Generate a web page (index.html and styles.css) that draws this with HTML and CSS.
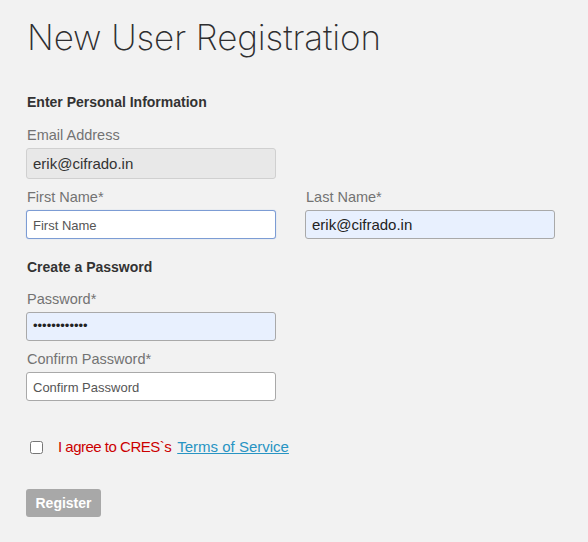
FILE: index.html
```html
<!DOCTYPE html>
<html>
<head>
	<meta charset="UTF-8">
	<title>New User Registration</title>
	<link rel="stylesheet" href="styles.css">
</head>
<body>
	<div class="container">
		<h1>New User Registration</h1>
		<form>
			<h2>Enter Personal Information</h2>
			<div class="field">
				<label for="email">Email Address</label>
				<input type="text" id="email" class="readonly" value="erik@cifrado.in" readonly>
			</div>
			<div class="row">
				<div class="field">
					<label for="first-name">First Name*</label>
					<input type="text" id="first-name" class="focused" placeholder="First Name">
				</div>
				<div class="field">
					<label for="last-name">Last Name*</label>
					<input type="text" id="last-name" class="filled" value="erik@cifrado.in">
				</div>
			</div>

			<h2 class="section">Create a Password</h2>
			<div class="field">
				<label for="password">Password*</label>
				<input type="password" id="password" class="filled" value="secretpass12">
			</div>
			<div class="field">
				<label for="confirm">Confirm Password*</label>
				<input type="password" id="confirm" placeholder="Confirm Password">
			</div>

			<div class="agree">
				<input type="checkbox" id="terms">
				<label for="terms">I agree to CRES`s</label>
				<a href="#">Terms of Service</a>
			</div>

			<input type="submit" value="Register" disabled>
		</form>
	</div>
</body>
</html>
```

FILE: styles.css
```css
body {
	margin: 0;
	background-color: #f2f2f2;
	font-family: "Liberation Sans", Arial, sans-serif;
	color: #333;
}
.container {
	padding: 14px 26px 0 26px;
}
h1 {
	margin: 0 0 0 1px;
	font-family: Inter, "Liberation Sans", sans-serif;
	font-weight: 200;
	font-size: 35px;
	line-height: 46px;
	letter-spacing: -0.1px;
	color: #2e2e30;
}
h2 {
	margin: 33px 0 15px 1px;
	font-size: 14px;
	line-height: 18px;
	font-weight: bold;
	color: #333;
}
h2.section {
	margin-top: 10px;
	margin-bottom: 14px;
}
.field {
	display: flex;
	flex-direction: column;
	width: 250px;
	margin-bottom: 9px;
}
.field label {
	font-size: 14.5px;
	line-height: 18px;
	color: #737373;
	margin: 0 0 4px 1px;
}
.row {
	display: flex;
	gap: 29px;
}
input[type=text],
input[type=password] {
	box-sizing: border-box;
	width: 250px;
	height: 29px;
	padding: 0 6px;
	border: 1px solid #a9a9a9;
	border-radius: 3px;
	background-color: #fff;
	font-family: "Liberation Sans", Arial, sans-serif;
	font-size: 15px;
	color: #222;
	outline: none;
}
input::placeholder {
	font-size: 13px;
	color: #555;
}
input.readonly {
	height: 31px;
	background-color: #e8e8e8;
	border-color: #d0d0d0;
	color: #333;
}
input.filled {
	background-color: #e8f0fe;
}
input.focused {
	border-color: #7c9cd4;
	box-shadow: 0 0 1px #9ab3e0;
}
input[type=password].filled {
	font-size: 13px;
	padding-bottom: 2px;
}
.agree {
	display: flex;
	align-items: center;
	margin-top: 36px;
	font-size: 15px;
	line-height: 20px;
}
.agree input[type=checkbox] {
	width: 13px;
	height: 13px;
	margin: 0 15px 0 4px;
}
.agree label {
	color: #cc0000;
	margin-right: 6px;
	letter-spacing: -0.5px;
}
.agree a {
	color: #2894c3;
}
input[type=submit] {
	margin-top: 32px;
	width: 75px;
	height: 28px;
	border: none;
	border-radius: 3px;
	background-color: #a8a8a8;
	color: #fff;
	font-family: "Liberation Sans", Arial, sans-serif;
	font-size: 14px;
	font-weight: bold;
}
```
